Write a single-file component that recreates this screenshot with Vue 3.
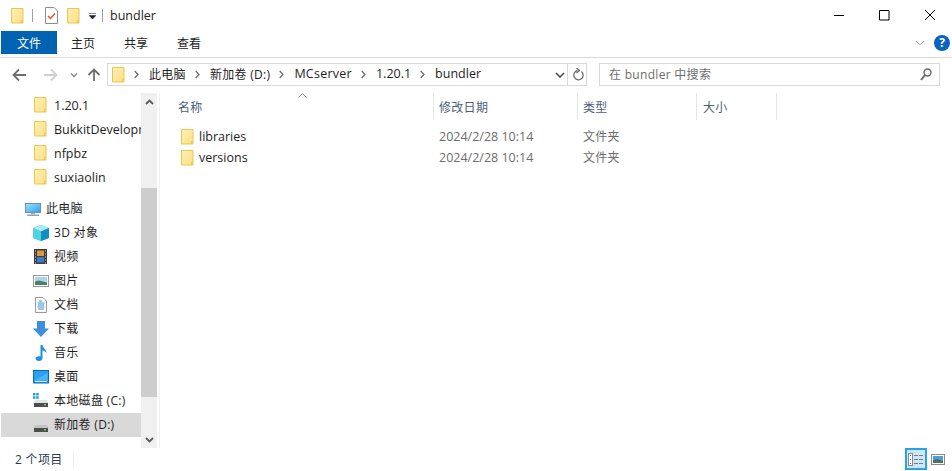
<script setup>
const quick = ['1.20.1', 'BukkitDevelopment', 'nfpbz', 'suxiaolin']
const places = [
  { n: '3D 对象', i: 'cube' },
  { n: '视频', i: 'video' },
  { n: '图片', i: 'pic' },
  { n: '文档', i: 'doc' },
  { n: '下载', i: 'down' },
  { n: '音乐', i: 'music' },
  { n: '桌面', i: 'desk' },
  { n: '本地磁盘 (C:)', i: 'c' },
  { n: '新加卷 (D:)', i: 'd', sel: true }
]
const crumbs = [
  { t: '此电脑', k: 'mix' },
  { t: '新加卷 (D:)', k: 'mix' },
  { t: 'MCserver', k: 'wide' },
  { t: '1.20.1', k: '' },
  { t: 'bundler', k: '' }
]
const files = ['libraries', 'versions']
</script>

<template>
  <div class="win">
    <svg width="0" height="0" class="defs">
      <defs>
        <linearGradient id="fg" x1="0" y1="0" x2="1" y2="1">
          <stop offset="0" stop-color="#fff0b4" />
          <stop offset="1" stop-color="#fcdf84" />
        </linearGradient>
        <symbol id="folder" viewBox="0 0 13 16">
          <path d="M.5.5h11.500v14.500H.5z" fill="url(#fg)" stroke="#e9c650" />
          <path d="M10.500 15v-2.500H12" fill="none" stroke="#e9c650" />
        </symbol>
      </defs>
    </svg>

    <header class="title">
      <svg class="fi first"><use href="#folder" /></svg>
      <i class="tsep"></i>
      <svg class="doc" width="13" height="17" viewBox="0 0 13 17">
        <path d="M.5.500h8.500l3.500 3.500v12.500H.5z" fill="#fff" stroke="#8c8c8c" />
        <path d="M3 9l2.500 2.500L10 6.500" fill="none" stroke="#e2552c" stroke-width="1.500" />
      </svg>
      <svg class="fi second"><use href="#folder" /></svg>
      <svg class="qa" width="7" height="6" viewBox="0 0 7 6">
        <path d="M0 .5h7M0 2.500h7L3.500 6z" fill="#222" stroke="#222" stroke-width=".5" />
      </svg>
      <i class="tsep two"></i>
      <span class="tname">bundler</span>
      <div class="wc">
        <svg width="46" height="31" viewBox="0 0 46 31"><path d="M20 15.500h10" stroke="#000" /></svg>
        <svg width="46" height="31" viewBox="0 0 46 31"><path d="M19.500 10.500h9.500v9.500h-9.500z" fill="none" stroke="#000" /></svg>
        <svg width="46" height="31" viewBox="0 0 46 31"><path d="M19 10l10 10M29 10L19 20" stroke="#000" /></svg>
      </div>
    </header>

    <nav class="tabs">
      <span class="tab file">文件</span>
      <span class="tab t1">主页</span>
      <span class="tab t2">共享</span>
      <span class="tab t3">查看</span>
      <svg class="rib" width="10" height="6" viewBox="0 0 10 6"><path d="M1 1l4 4 4-4" fill="none" stroke="#9a9a9a" /></svg>
      <span class="help">?</span>
    </nav>

    <div class="addr">
      <svg class="nav" width="107" height="20" viewBox="0 0 107 20">
        <path d="M26 10H14M19 4.500L13.500 10l5.500 5.500" fill="none" stroke="#6d6d6d" stroke-width="1.800" />
        <path d="M44 10h12M51 4.500l5.500 5.500-5.500 5.500" fill="none" stroke="#cfcfcf" stroke-width="1.800" />
        <path d="M71 8.500l3 3 3-3" fill="none" stroke="#8a8a8a" stroke-width="1.400" />
        <path d="M94 16V4.500M88.500 10L94 4.500 99.500 10" fill="none" stroke="#6d6d6d" stroke-width="1.800" />
      </svg>
      <div class="box path">
        <svg class="fi crumbf"><use href="#folder" /></svg>
        <template v-for="c in crumbs" :key="c.t">
          <svg class="chev" width="5" height="9" viewBox="0 0 5 9"><path d="M.7 1l3.300 3.500L.7 8" fill="none" stroke="#6d6d6d" stroke-width="1.300" /></svg>
          <span class="crumb" :class="c.k">{{ c.t }}</span>
        </template>
        <svg class="dd" width="10" height="6" viewBox="0 0 10 6"><path d="M1 1l4 4 4-4" fill="none" stroke="#444" stroke-width="1.500" /></svg>
        <i class="bsep"></i>
        <svg class="ref" width="12" height="13" viewBox="0 0 12 13">
          <path d="M9.500 3.500A4.700 4.700 0 1 1 5.500 2.500" fill="none" stroke="#6d6d6d" stroke-width="1.300" />
          <path d="M4.500 0l3 2.500-3 2.500" fill="none" stroke="#6d6d6d" stroke-width="1.300" />
        </svg>
      </div>
      <div class="box search">
        <span class="ph mix">在 bundler 中搜索</span>
        <svg width="12" height="13" viewBox="0 0 12 13">
          <circle cx="7.500" cy="4.500" r="3.500" fill="none" stroke="#666" stroke-width="1.400" />
          <path d="M5 7L1 12" stroke="#666" stroke-width="2" />
        </svg>
      </div>
    </div>

    <main class="body">
      <aside class="side">
        <div class="tree">
          <div v-for="q in quick" :key="q" class="row q">
            <svg class="fi"><use href="#folder" /></svg>
            <span class="lbl">{{ q }}</span>
          </div>
          <div class="row pc">
            <svg width="17" height="16" viewBox="0 0 17 16">
              <defs><linearGradient id="sc" x1="0" y1="0" x2="1" y2="1"><stop offset="0" stop-color="#9fe2ff" /><stop offset="1" stop-color="#2f9fec" /></linearGradient></defs>
              <rect x=".5" y="2.500" width="15" height="9" fill="url(#sc)" stroke="#6a93b0" />
              <path d="M6 12h4v1.500H6z" fill="#a8b6c2" />
              <path d="M2 13.500h12V15H2z" fill="#8ea3b5" />
            </svg>
            <span class="lbl mix">此电脑</span>
          </div>
          <div v-for="p in places" :key="p.n" class="row pl" :class="{ sel: p.sel }">
            <svg width="16" height="16" viewBox="0 0 16 16" class="pi">
              <g v-if="p.i === 'cube'">
                <path d="M8 0l8 3v10l-8 3-8-3V3z" fill="#35c1d8" />
                <path d="M8 0l8 3-8 3.500L0 3z" fill="#a8ecf4" />
                <path d="M8 6.500L16 3v10l-8 3z" fill="#0f8fc4" />
                <path d="M0 3l8 3.500V16l-8-3z" fill="#4fd3e2" />
              </g>
              <g v-else-if="p.i === 'video'">
                <rect x="1" y="0" width="13" height="15" fill="#3c3c3c" />
                <rect x="4" y="1.500" width="7" height="5.500" fill="#d89a3c" />
                <rect x="4" y="8" width="7" height="5.500" fill="#3e78c8" />
                <path d="M2 2h1M2 5h1M2 8h1M2 11h1M2 14h1M12 2h1M12 5h1M12 8h1M12 11h1M12 14h1" stroke="#ddd" />
              </g>
              <g v-else-if="p.i === 'pic'">
                <rect x=".5" y="2.500" width="15" height="11" fill="#fff" stroke="#9a9a9a" />
                <rect x="2" y="4" width="12" height="8" fill="#a9d5ee" />
                <path d="M2 8.500l4-1 8 2V12H2z" fill="#4f7d66" />
              </g>
              <g v-else-if="p.i === 'doc'">
                <path d="M2.500.5h7.500l3.500 3.500v11.500h-11z" fill="#fff" stroke="#999" />
                <path d="M6 4h3M4.500 6h7M5 8h6M4.500 10h7M5 12h6" stroke="#3c8fd0" />
              </g>
              <path v-else-if="p.i === 'down'" d="M4 0h8v7.500h4L8 16 0 7.500h4z" fill="#3f8edc" />
              <path v-else-if="p.i === 'music'" d="M7.500 0h2c0 3 4 4 4 8-1-1.500-2.500-2.500-4-2.500V13c0 2-1.500 3-3.500 3s-3.500-1-3.500-2.500S5 10.500 7.500 11.500z" fill="#1c8fe8" />
              <g v-else-if="p.i === 'desk'">
                <rect x=".5" y="1.500" width="15" height="12.500" fill="#2aa0f2" stroke="#0a68b8" />
                <path d="M1.500 11.500L14.500 4v7.500z" fill="#4fb4f4" />
                <path d="M2 12.500h12" stroke="#cfeafc" />
              </g>
              <g v-else-if="p.i === 'c'">
                <path d="M0 0h2.500v2.500H0zM3.200 0h2.500v2.500H3.200zM0 3.200h2.500v2.500H0zM3.200 3.200h2.500v2.500H3.200z" fill="#1fa3e0" />
                <path d="M2 7h12l1.500 3H.5z" fill="#e4e4e4" />
                <rect x="1" y="10" width="14" height="4" fill="#4d4d4d" />
                <rect x="11" y="11" width="2" height="1.500" fill="#4ce04c" />
              </g>
              <g v-else>
                <path d="M2 8h12l1.500 3H.5z" fill="#c4c4c4" />
                <rect x="1" y="11" width="14" height="4" fill="#4d4d4d" />
                <rect x="11" y="12" width="2" height="1.500" fill="#4ce04c" />
              </g>
            </svg>
            <span class="lbl mix">{{ p.n }}</span>
          </div>
        </div>
        <div class="bar">
          <div class="sbtn"><svg width="9" height="6" viewBox="0 0 9 6"><path d="M1 5l3.500-3.500L8 5" fill="none" stroke="#5a5a5a" stroke-width="1.800" /></svg></div>
          <div class="gap1"></div>
          <div class="thumb"></div>
          <div class="gap2"></div>
          <div class="sbtn"><svg width="9" height="6" viewBox="0 0 9 6"><path d="M1 1l3.500 3.500L8 1" fill="none" stroke="#5a5a5a" stroke-width="1.800" /></svg></div>
        </div>
      </aside>

      <section class="list">
        <div class="head">
          <svg class="sort" width="9" height="5" viewBox="0 0 9 5"><path d="M.5 4.500l4-4 4 4" fill="none" stroke="#8a8a8a" /></svg>
          <span class="col c1 mix">名称</span>
          <span class="col c2 mix">修改日期</span>
          <span class="col c3 mix">类型</span>
          <span class="col c4 mix">大小</span>
        </div>
        <div v-for="f in files" :key="f" class="file-row">
          <span class="c1 fname">
            <svg class="fi"><use href="#folder" /></svg>{{ f }}
          </span>
          <span class="c2 meta">2024/2/28 10:14</span>
          <span class="c3 meta mix up">文件夹</span>
        </div>
      </section>
    </main>

    <footer class="status">
      <span class="count mix up">2 个项目</span>
      <i class="ssep"></i>
      <span class="views">
        <span class="vb on">
          <svg width="16" height="13" viewBox="0 0 16 13">
            <rect x=".5" y=".5" width="4" height="12" fill="#fff" stroke="#8a8a8a" />
            <path d="M6 2.500h4M11 2.500h4M6 6.500h4M11 6.500h4M6 10.500h4M11 10.500h4" stroke="#7a7a7a" />
            <path d="M2 2h1v1H2zM2 6h1v1H2z" fill="#666" />
            <path d="M2 10h1v1H2z" fill="#c84040" />
          </svg>
        </span>
        <span class="vb">
          <svg width="14" height="11" viewBox="0 0 14 11">
            <rect x=".5" y=".5" width="13" height="10" fill="#fff" stroke="#8a8a8a" />
            <rect x="2" y="2" width="10" height="7" fill="#4d9ddc" />
            <path d="M2 6l4-1 6 2v2H2z" fill="#4d6f5c" />
          </svg>
        </span>
      </span>
    </footer>
  </div>
</template>

<style>
html, body { margin: 0; background: #fff; overflow: hidden; }
</style>

<style scoped>
.win {
  width: 952px;
  height: 471px;
  display: flex;
  flex-direction: column;
  font: 12.5px "Open Sans", "Noto Sans CJK SC", sans-serif;
  color: #1e1e1e;
  background: #fff;
  overflow: hidden;
}
.mix { font-size: 12px; letter-spacing: .3px; }
.up { margin-bottom: 2px; }
.defs { position: absolute; }
i { display: block; font-style: normal; }
.fi { width: 13px; height: 16px; flex: none; }

.title { height: 31px; display: flex; align-items: center; flex: none; }
.first { margin-left: 11px; }
.tsep { width: 1px; height: 13px; background: #a0a0a0; margin-left: 8px; }
.doc { margin-left: 12px; }
.second { margin-left: 9px; }
.qa { margin-left: 9px; }
.tsep.two { margin-left: 6px; }
.tname { margin-left: 7px; }

.wc { margin-left: auto; display: flex; }
.wc svg { display: block; }

.tabs { height: 23px; display: flex; align-items: center; flex: none; border-bottom: 1px solid #dadada; padding-bottom: 3px; box-sizing: content-box; }
.tab { display: flex; align-items: center; justify-content: center; height: 23px; color: #222; font-size: 12px; }
.file { width: 56px; margin-left: 1px; background: #0063b1; color: #fff; }
.t1 { margin-left: 14px; }
.t2 { margin-left: 29px; }
.t3 { margin-left: 29px; }
.rib { margin-left: auto; margin-right: 9px; }
.help { width: 16px; height: 16px; border-radius: 50%; background: #0a63c0; color: #fff; font: 700 12px/16px "Open Sans", sans-serif; text-align: center; margin-right: 2px; }

.addr { height: 33px; display: flex; align-items: center; flex: none; }
.nav { flex: none; }
.box { border: 1px solid #d9d9d9; box-sizing: content-box; display: flex; align-items: center; height: 21px; }
.path { width: 478px; }
.crumbf { margin-left: 4px; }
.chev { margin-left: 9px; margin-right: 10px; flex: none; }
.crumb { white-space: nowrap; margin-bottom: 2px; }
.wide { letter-spacing: .25px; }
.dd { margin-left: auto; margin-right: 2px; }
.bsep { width: 1px; height: 21px; background: #d9d9d9; }
.ref { margin: 0 2px 0 4px; }
.search { margin-left: 12px; width: 339px; color: #6d6d6d; justify-content: space-between; }
.ph { margin-left: 9px; margin-bottom: 2px; }
.search svg { margin-right: 7px; }

.body { flex: 1; display: flex; min-height: 0; padding-top: 2px; }
.side { width: 159px; flex: none; display: flex; border-right: 1px solid #f0f0f0; box-sizing: content-box; }
.tree { width: 140px; margin-left: 1px; overflow: hidden; }
.row { height: 24px; display: flex; align-items: center; white-space: nowrap; }
.lbl { flex: none; }
.lbl.mix { margin-bottom: 2px; }
.q { padding-left: 33px; }
.q .lbl { margin-left: 7px; }
.pc { padding-left: 24px; margin-top: 8px; }
.pc .lbl { margin-left: 4px; }
.pl { padding-left: 32px; }
.pl .lbl { margin-left: 5px; }
.pi { flex: none; }
.sel { background: #d9d9d9; }
.bar { width: 16px; display: flex; flex-direction: column; background: #f0f0f0; }
.sbtn { height: 17px; display: flex; align-items: center; justify-content: center; flex: none; }
.gap1 { height: 78px; flex: none; }
.thumb { height: 209px; background: #cdcdcd; flex: none; }
.gap2 { flex: 1; }

.list { flex: 1; }
.head { position: relative; height: 27px; display: flex; color: #4c607a; margin-bottom: 6px; }
.sort { position: absolute; left: 138px; top: 0; }
.col { display: flex; align-items: center; box-sizing: border-box; border-right: 1px solid #e5e5e5; padding-left: 5px; }
.c1 { width: 274px; }
.head .c1 { padding-left: 18px; }
.c2 { width: 144px; }
.c3 { width: 119px; }
.c4 { width: 80px; padding-left: 6px; }
.file-row { height: 21px; display: flex; align-items: center; }
.fname { display: flex; align-items: center; padding-left: 21px; box-sizing: border-box; color: #1e1e1e; }
.fname .fi { margin-right: 5px; }
.meta { color: #6d6d6d; padding-left: 5px; box-sizing: border-box; }

.status { height: 23px; flex: none; display: flex; align-items: center; color: #2b3d55; }
.count { margin-left: 15px; }
.ssep { width: 1px; height: 16px; background: #f0f0f0; margin-left: 11px; }
.views { margin-left: auto; display: flex; align-items: center; margin-right: 7px; align-self: flex-start; }
.vb { display: flex; align-items: center; justify-content: center; }
.vb.on { box-sizing: border-box; width: 22px; height: 22px; border: 2px solid #2ea1e0; background: #cce8f8; margin-right: 4px; }
</style>
